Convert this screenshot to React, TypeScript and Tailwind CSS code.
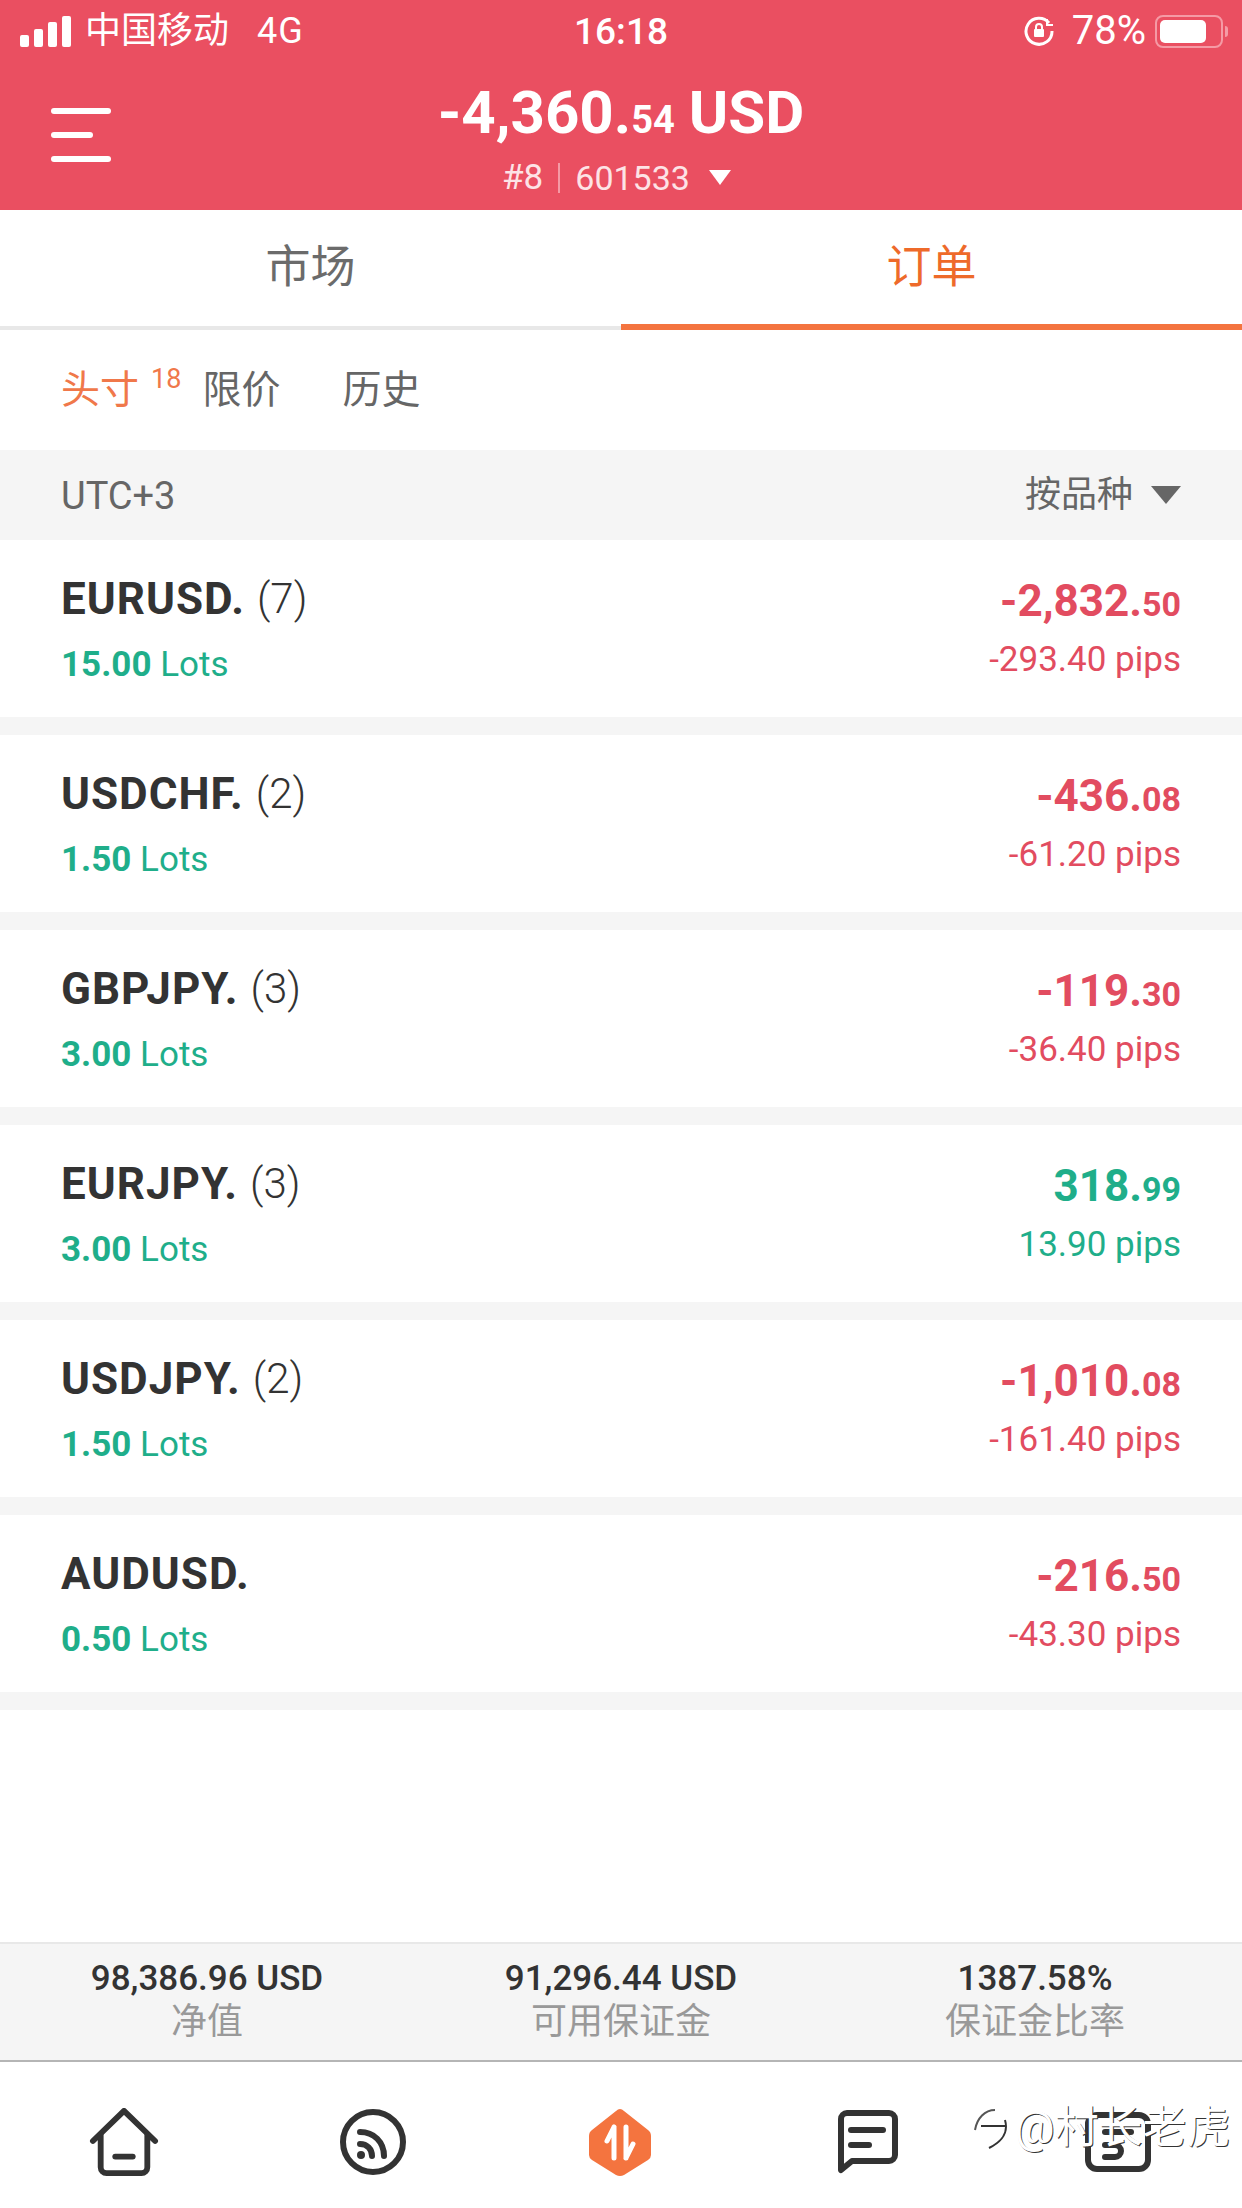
const FONT = 'font-["Roboto","Noto_Sans_CJK_SC",sans-serif]';

interface Position {
  symbol: string;
  count?: number;
  lots: string;
  whole: string;
  cents: string;
  pips: string;
  up?: boolean;
}

const positions: Position[] = [
  { symbol: 'EURUSD.', count: 7, lots: '15.00', whole: '-2,832.', cents: '50', pips: '-293.40 pips' },
  { symbol: 'USDCHF.', count: 2, lots: '1.50', whole: '-436.', cents: '08', pips: '-61.20 pips' },
  { symbol: 'GBPJPY.', count: 3, lots: '3.00', whole: '-119.', cents: '30', pips: '-36.40 pips' },
  { symbol: 'EURJPY.', count: 3, lots: '3.00', whole: '318.', cents: '99', pips: '13.90 pips', up: true },
  { symbol: 'USDJPY.', count: 2, lots: '1.50', whole: '-1,010.', cents: '08', pips: '-161.40 pips' },
  { symbol: 'AUDUSD.', lots: '0.50', whole: '-216.', cents: '50', pips: '-43.30 pips' },
];

const summary = [
  { value: '98,386.96 USD', label: '净值' },
  { value: '91,296.44 USD', label: '可用保证金' },
  { value: '1387.58%', label: '保证金比率' },
];

function StatusBar() {
  return (
    <div className="flex h-[62px] items-center justify-between pl-[20px] pr-[14px] leading-none text-white">
      <div className="flex w-[414px] items-center">
        <div className="flex items-end gap-[5px]">
          <span className="h-[12px] w-[9px] rounded-[2px] bg-white" />
          <span className="h-[18px] w-[9px] rounded-[2px] bg-white" />
          <span className="h-[25px] w-[9px] rounded-[2px] bg-white" />
          <span className="h-[31px] w-[9px] rounded-[2px] bg-white" />
        </div>
        <span className="ml-[14px] text-[36px]">中国移动</span>
        <span className="ml-[28px] text-[36px] tracking-[1px]">4G</span>
      </div>
      <span className="text-[37px] font-medium">16:18</span>
      <div className="flex w-[420px] items-center justify-end">
        <svg viewBox="0 0 32 32" className="h-[32px] w-[32px]" fill="none" stroke="white" strokeWidth="3">
          <path d="M26 8A13 13 0 1 0 29 16" />
          <path d="M24 4v6h6" strokeWidth="2" />
          <rect x="11" y="14" width="10" height="8" rx="1" fill="white" stroke="none" />
          <path d="M13 14v-2a3 3 0 0 1 6 0v2" strokeWidth="2" />
        </svg>
        <span className="ml-[17px] text-[40px]">78%</span>
        <div className="ml-[9px] flex h-[33px] w-[68px] items-center rounded-[8px] border-2 border-[#f59aa5] p-[3px]">
          <div className="h-full w-[46px] rounded-[5px] bg-white" />
        </div>
        <span className="ml-[2px] h-[11px] w-[3px] rounded-r-full bg-[#f59aa5]" />
      </div>
    </div>
  );
}

function Header() {
  return (
    <div className="h-[210px] bg-[#ea4f61] text-white">
      <StatusBar />
      <div className="relative flex flex-col items-center pt-[21px]">
        <div className="absolute left-[51px] top-[46px] flex flex-col gap-[18px]">
          <span className="h-[6px] w-[60px] rounded-full bg-white" />
          <span className="h-[6px] w-[42px] rounded-full bg-white" />
          <span className="h-[6px] w-[60px] rounded-full bg-white" />
        </div>
        <div className="flex h-[62px] items-baseline text-[60px] font-bold leading-none">
          -4,360.<span className="text-[38px]">54</span>
          <span className="ml-[14px]">USD</span>
        </div>
        <div className="mt-[15px] flex items-center text-[35px] leading-none text-[#fde3e6]">
          <span>#8</span>
          <span className="mx-[15px] h-[30px] w-[2px] bg-[#f59aa5]" />
          <span className="text-[34px]">601533</span>
          <span className="ml-[19px] mr-[9px] h-0 w-0 border-x-[11px] border-t-[15px] border-x-transparent border-t-white" />
        </div>
      </div>
    </div>
  );
}

function MainTabs() {
  return (
    <div className="flex h-[120px] bg-white text-[45px]">
      <div className="flex flex-1 items-center justify-center border-b-[4px] border-[#e8e8e8] text-[#6b6b6b]">市场</div>
      <div className="flex flex-1 items-center justify-center border-b-[6px] border-[#f4743f] pt-[2px] text-[#ee6a2a]">订单</div>
    </div>
  );
}

function SubTabs() {
  return (
    <div className="flex h-[120px] items-center bg-white pl-[61px] text-[39px] text-[#666]">
      <span className="text-[#f0784a]">头寸</span>
      <span className="mb-[22px] ml-[12px] text-[27px] leading-none text-[#f0784a]">18</span>
      <span className="ml-[21px]">限价</span>
      <span className="ml-[62px]">历史</span>
    </div>
  );
}

function PositionRow({ item }: { item: Position }) {
  const color = item.up ? 'text-[#1fae8a]' : 'text-[#e24c60]';
  return (
    <div className="mb-[18px] flex h-[177px] justify-between bg-white px-[61px]">
      <div className="flex flex-col">
        <div className="mt-[34px] flex h-[50px] items-center text-[44px] leading-none text-[#333]">
          <span className="font-bold tracking-[1px]">{item.symbol}</span>
          {item.count !== undefined && <span className="ml-[12px] text-[42px] font-light">({item.count})</span>}
        </div>
        <div className="mt-[23px] text-[35px] leading-none text-[#1fae8a]">
          <span className="font-bold">{item.lots}</span> Lots
        </div>
      </div>
      <div className="flex flex-col items-end">
        <div className={`mt-[36px] h-[50px] text-[44px] font-bold leading-[50px] ${color}`}>
          {item.whole}
          <span className="text-[34px]">{item.cents}</span>
        </div>
        <div className={`mt-[16px] text-[35px] leading-none ${color}`}>{item.pips}</div>
      </div>
    </div>
  );
}

function BottomNav() {
  return (
    <div className="relative flex h-[146px] items-center bg-white pt-[14px]">
      <div className="flex w-[248px] justify-center">
        <svg viewBox="0 0 70 70" className="h-[68px] w-[70px]" fill="none" stroke="#333" strokeWidth="6" strokeLinejoin="round" strokeLinecap="round">
          <path d="M3 34 35 3l32 31" />
          <path d="M11 28v33a6 6 0 0 0 6 6h36a6 6 0 0 0 6-6V28" />
          <path d="M26 50h18" />
        </svg>
      </div>
      <div className="flex w-[250px] justify-center">
        <svg viewBox="0 0 66 66" className="h-[66px] w-[66px]" fill="none" stroke="#333" strokeWidth="6" strokeLinecap="round">
          <circle cx="33" cy="33" r="30" />
          <path d="M20 23c14 0 24 10 24 24" />
          <path d="M20 35c7 0 12 5 12 12" />
          <circle cx="21" cy="46" r="4" fill="#333" stroke="none" />
        </svg>
      </div>
      <div className="flex w-[244px] justify-center">
        <svg viewBox="0 0 62 69" className="h-[69px] w-[62px]">
          <path d="M31 1Q33 1 35 3L59 22Q62 24 62 28V47Q62 50 59 52L35 67Q31 69 27 67L3 52Q0 50 0 47V28Q0 24 3 22L27 3Q29 1 31 1Z" fill="#f4743f" />
          <path d="M25 19V50M25 19 18 33" stroke="white" strokeWidth="5" fill="none" strokeLinecap="round" />
          <path d="M37 19V50M37 50 44 36" stroke="white" strokeWidth="5" fill="none" strokeLinecap="round" />
        </svg>
      </div>
      <div className="flex w-[252px] justify-center">
        <svg viewBox="0 0 60 64" className="h-[64px] w-[60px]" fill="none" stroke="#333" strokeWidth="6" strokeLinecap="round" strokeLinejoin="round">
          <path d="M3 60V9a6 6 0 0 1 6-6h42a6 6 0 0 1 6 6v36a6 6 0 0 1-6 6H14Z" />
          <path d="M13 20h32" />
          <path d="M13 35h18" />
        </svg>
      </div>
      <div className="flex w-[248px] justify-center">
        <svg viewBox="0 0 66 60" className="h-[60px] w-[66px]" fill="none" stroke="#333" strokeWidth="6" strokeLinecap="round">
          <rect x="3" y="3" width="60" height="54" rx="9" />
          <path d="M20 20h26" />
          <path d="M20 33h10a6 6 0 0 1 0 12H20" />
        </svg>
      </div>
      {/* 水印 */}
      <div className="absolute left-[971px] top-[44px] flex items-center text-[44px] leading-none text-white [text-shadow:1px_1px_0_#333]">
        <svg viewBox="0 0 40 44" className="h-[44px] w-[40px]" fill="none" stroke="#333" strokeWidth="2">
          <path d="M4 24C6 12 14 4 24 4" stroke="#555" />
          <path d="M10 20h24" />
          <path d="M34 14c4 14-4 22-16 28" />
        </svg>
        <span className="ml-[4px]">@村长老虎</span>
      </div>
    </div>
  );
}

export default function App() {
  return (
    <div className={`flex h-[2208px] w-[1242px] flex-col overflow-hidden bg-white ${FONT}`}>
      <Header />
      <MainTabs />
      <SubTabs />
      <div className="flex h-[90px] items-center justify-between bg-[#f5f5f5] px-[61px] text-[38px] text-[#666]">
        <span className="pt-[2px]">UTC+3</span>
        <div className="flex items-center">
          <span className="text-[36px]">按品种</span>
          <span className="ml-[18px] h-0 w-0 border-x-[15px] border-t-[18px] border-x-transparent border-t-[#666]" />
        </div>
      </div>
      <div className="flex flex-col bg-[#f5f5f5]">
        {positions.map((item) => (
          <PositionRow key={item.symbol} item={item} />
        ))}
      </div>
      <div className="flex-1 bg-white" />
      <div className="flex h-[120px] border-y-2 border-b-[#b5b5b5] border-t-[#e8e8e8] bg-[#f5f5f5]">
        {summary.map((s) => (
          <div key={s.label} className="flex flex-1 flex-col items-center pt-[17px]">
            <span className="text-[35px] font-medium leading-none text-[#333]">{s.value}</span>
            <span className="mt-[8px] text-[36px] leading-none text-[#999]">{s.label}</span>
          </div>
        ))}
      </div>
      <BottomNav />
    </div>
  );
}
